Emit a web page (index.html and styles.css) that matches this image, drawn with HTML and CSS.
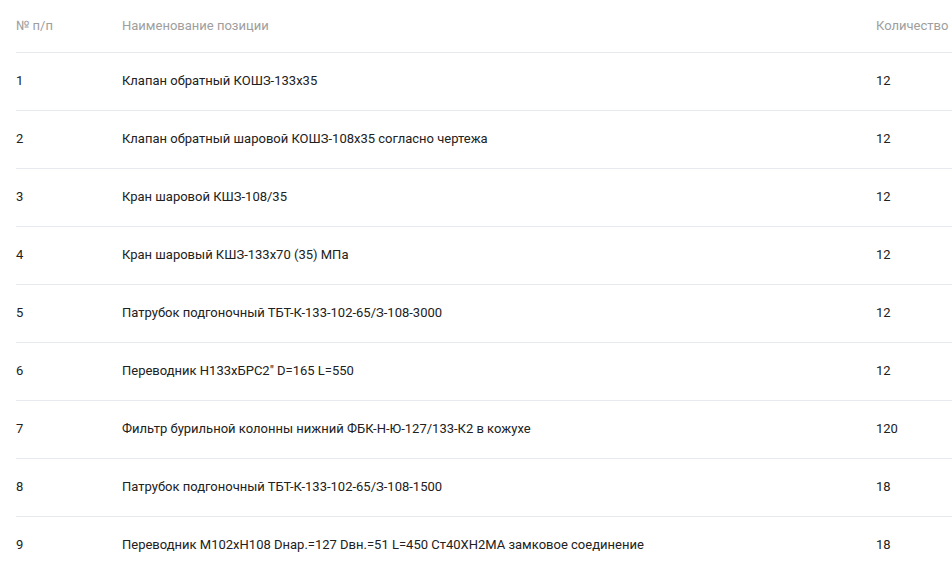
FILE: index.html
```html
<!DOCTYPE html>
<html lang="ru">
<head>
<meta charset="utf-8">
<title>Позиции</title>
<link rel="stylesheet" href="styles.css">
</head>
<body>
<div class="wrap">
<table class="items">
  <colgroup>
    <col class="c-num">
    <col class="c-name">
    <col class="c-qty">
  </colgroup>
  <thead>
    <tr><th>№ п/п</th><th>Наименование позиции</th><th>Количество</th></tr>
  </thead>
  <tbody>
    <tr><td>1</td><td>Клапан обратный КОШЗ-133х35</td><td>12</td></tr>
    <tr><td>2</td><td>Клапан обратный шаровой КОШЗ-108х35 согласно чертежа</td><td>12</td></tr>
    <tr><td>3</td><td>Кран шаровой КШЗ-108/35</td><td>12</td></tr>
    <tr><td>4</td><td>Кран шаровый КШЗ-133х70 (35) МПа</td><td>12</td></tr>
    <tr><td>5</td><td>Патрубок подгоночный ТБТ-К-133-102-65/З-108-3000</td><td>12</td></tr>
    <tr><td>6</td><td>Переводник Н133хБРС2" D=165 L=550</td><td>12</td></tr>
    <tr><td>7</td><td>Фильтр бурильной колонны нижний ФБК-Н-Ю-127/133-К2 в кожухе</td><td>120</td></tr>
    <tr><td>8</td><td>Патрубок подгоночный ТБТ-К-133-102-65/З-108-1500</td><td>18</td></tr>
    <tr><td>9</td><td>Переводник М102хН108 Dнар.=127 Dвн.=51 L=450 Ст40ХН2МА замковое соединение</td><td>18</td></tr>
  </tbody>
</table>
</div>
</body>
</html>
```
FILE: styles.css
```css
html, body {
  margin: 0;
  padding: 0;
  background: #ffffff;
}
body {
  font-family: Roboto, "Liberation Sans", sans-serif;
  font-size: 13px;
  color: #212121;
  overflow: hidden;
}
.wrap {
  padding-left: 16px;
}
.items {
  width: 936px;
  border-collapse: collapse;
  table-layout: fixed;
}
.c-num { width: 106px; }
.c-name { width: 754px; }
.c-qty { width: 76px; }
.items th {
  height: 50px;
  padding: 0 0 2px 0;
  text-align: left;
  font-weight: 400;
  color: #9e9e9e;
  border-bottom: 1px solid #e6eaee;
  white-space: nowrap;
  vertical-align: middle;
}
.items td {
  height: 55px;
  padding: 0 0 2px 0;
  text-align: left;
  border-bottom: 1px solid #e6eaee;
  white-space: nowrap;
  vertical-align: middle;
}
```
